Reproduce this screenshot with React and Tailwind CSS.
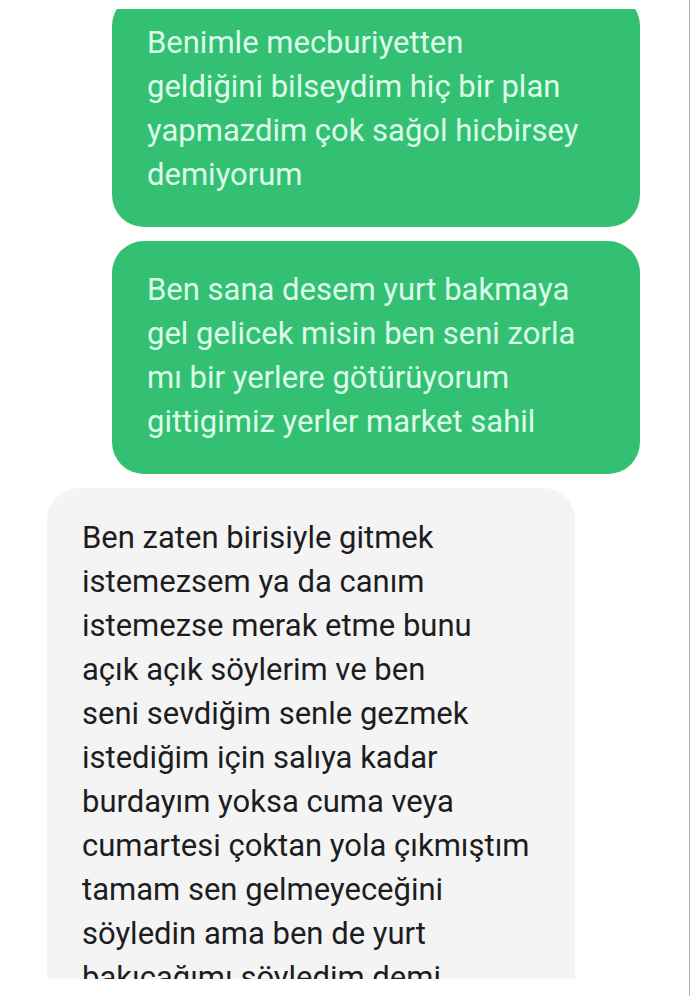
import React from 'react';

const messages = [
  {
    id: 1,
    from: 'me',
    lines: ['Benimle mecburiyetten', 'geldiğini bilseydim hiç bir plan', 'yapmazdim çok sağol hicbirsey', 'demiyorum'],
  },
  {
    id: 2,
    from: 'me',
    lines: ['Ben sana desem yurt bakmaya', 'gel gelicek misin ben seni zorla', 'mı bir yerlere götürüyorum', 'gittigimiz yerler market sahil'],
  },
  {
    id: 3,
    from: 'them',
    lines: [
      'Ben zaten birisiyle gitmek',
      'istemezsem ya da canım',
      'istemezse merak etme bunu',
      'açık açık söylerim ve ben',
      'seni sevdiğim senle gezmek',
      'istediğim için salıya kadar',
      'burdayım yoksa cuma veya',
      'cumartesi çoktan yola çıkmıştım',
      'tamam sen gelmeyeceğini',
      'söyledin ama ben de yurt',
      'bakıcağımı söyledim demi',
    ],
  },
];

const Bubble = ({ from, lines }) => {
  const mine = from === 'me';

  return (
    <li
      className={`w-full max-w-[528px] shrink-0 rounded-[32px] px-[35px] text-[31px] leading-[44px] ${
        mine ? 'self-end bg-[#34c072] pt-[27px] pb-[30px] text-[#dcfcea]' : 'self-start bg-[#f4f4f4] pt-7 pb-[30px] text-[#1d1d1f]'
      }`}
    >
      {lines.map((line) => (
        <p key={line} className="whitespace-nowrap">{line}</p>
      ))}
    </li>
  );
};

export default function App() {
  return (
    <main className="flex h-screen flex-col border-r border-[#b4b4b6] bg-white pt-[9px] pr-[49px] pb-[17px] pl-[47px] font-[Roboto,sans-serif]">
      {/* the thread is scrolled a little, so both ends are clipped */}
      <section className="min-h-0 flex-1 overflow-hidden">
        <ul className="-mt-[15px] flex flex-col gap-[14px]">
          {messages.map((message) => (
            <Bubble key={message.id} from={message.from} lines={message.lines} />
          ))}
        </ul>
      </section>
    </main>
  );
}
